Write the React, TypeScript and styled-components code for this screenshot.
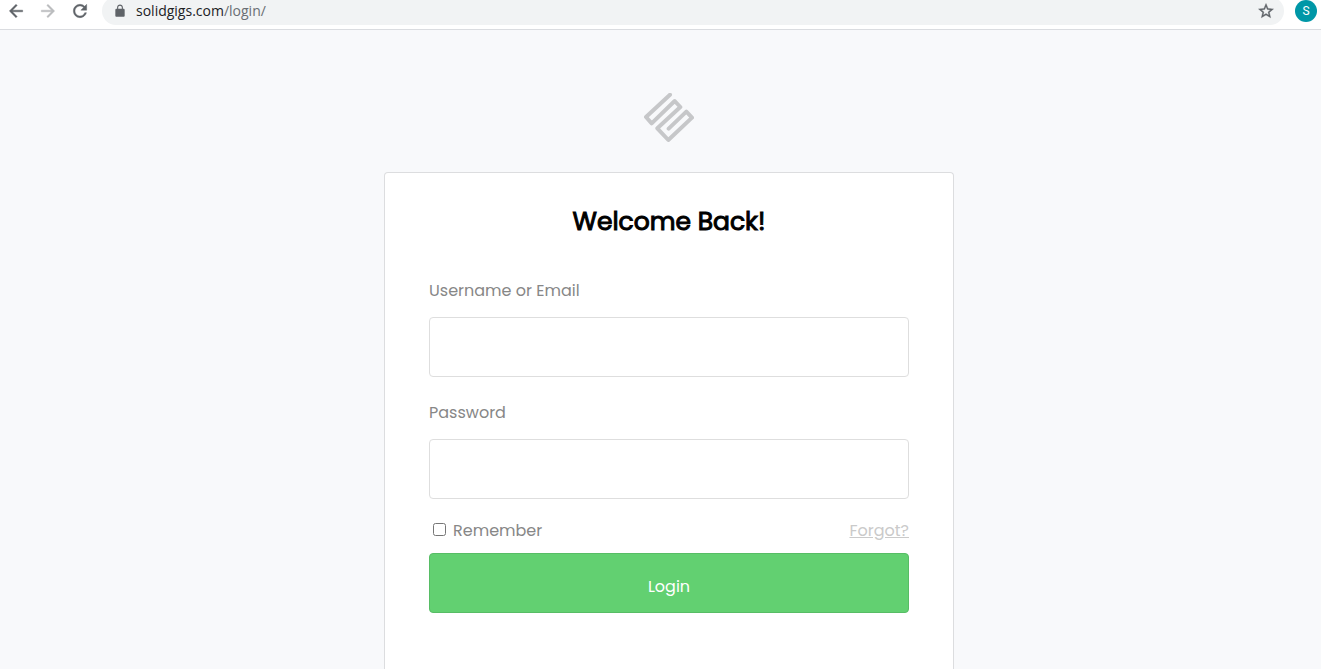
import React from "react";
import styled, { createGlobalStyle } from "styled-components";

const GlobalStyle = createGlobalStyle`
  *, *::before, *::after { box-sizing: border-box; }
  body {
    margin: 0;
    background: #f8f9fb;
    font-family: Poppins, Inter, sans-serif;
    font-size: 16px;
    line-height: 26px;
    color: #878787;
  }
`;

const Screen = styled.div`
  display: flex;
  flex-direction: column;
  min-height: 100vh;
  overflow: hidden;
`;

const Toolbar = styled.header`
  display: flex;
  align-items: center;
  margin-top: -3px;
  padding: 0 4px 4px 0;
  background: #fff;
  border-bottom: 1px solid #dadce0;
`;

const ToolButton = styled.button<{ $muted?: boolean }>`
  display: flex;
  align-items: center;
  justify-content: center;
  width: 32px;
  height: 28px;
  padding: 0;
  border: 0;
  background: none;
  color: ${(p) => (p.$muted ? "#babcbe" : "#5f6368")};

  svg {
    stroke: currentColor;
    stroke-width: 0.5;
  }
`;

const AddressBar = styled.div`
  display: flex;
  flex: 1;
  align-items: center;
  height: 28px;
  margin: 0 11px 0 6px;
  padding: 0 2px 0 11px;
  border-radius: 14px;
  background: #f1f3f4;
  color: #5f6368;
`;

const Address = styled.div`
  flex: 1;
  margin-left: 9px;
  font-family: "Segoe UI", "Open Sans", sans-serif;
  font-size: 14px;
  line-height: 20px;
  color: #6a6e73;
`;

const Host = styled.span`
  color: #202124;
`;

const Avatar = styled.button`
  width: 22px;
  height: 22px;
  padding: 0;
  border: 0;
  border-radius: 50%;
  background: #0097a7;
  color: #fff;
  font-family: Roboto, sans-serif;
  font-size: 12px;
  line-height: 22px;
`;

const Page = styled.main`
  display: flex;
  flex: 1;
  flex-direction: column;
  align-items: center;
  padding: 63px 0 0 17px;
`;

const Card = styled.section`
  flex: 1;
  width: 100%;
  max-width: 570px;
  margin-top: 29px;
  padding: 33px 44px 48px;
  border: 1px solid #dcdddf;
  border-bottom: 0;
  border-radius: 4px 4px 0 0;
  background: #fff;
`;

const Title = styled.h1`
  margin: 0 0 40px;
  font-size: 25px;
  font-weight: 400;
  line-height: 32px;
  text-align: center;
  color: #000;
  -webkit-text-stroke: 1px #000;
`;

const Field = styled.div`
  display: flex;
  flex-direction: column;
  gap: 13px;
  margin-bottom: 23px;

  &:last-of-type { margin-bottom: 19px; }
`;

const Fields = styled.div``;

const TextInput = styled.input`
  width: 100%;
  height: 60px;
  padding: 0 16px;
  border: 1px solid #dedede;
  border-radius: 4px;
  background: #fff;
  font: inherit;
`;

const Options = styled.div`
  display: flex;
  justify-content: space-between;
  margin-bottom: 9px;
`;

const Remember = styled.label`
  display: flex;
  gap: 7px;
`;

const Checkbox = styled.input`
  width: 13px;
  height: 13px;
  margin: 5px 0 0 4px;
`;

const ForgotLink = styled.a`
  color: #cacaca;
  text-decoration: underline;
`;

const LoginButton = styled.button`
  display: block;
  width: 100%;
  height: 60px;
  padding: 8px 0 0;
  border: 1px solid #57bd65;
  border-radius: 4px;
  background: #62d071;
  color: #fff;
  font: inherit;
`;

function Glyph({ d, size }: { d: string; size: number }) {
  return (
    <svg width={size} height={size} viewBox="0 0 24 24" fill="currentColor" aria-hidden="true">
      <path d={d} />
    </svg>
  );
}

function Logo() {
  return (
    <svg width="50" height="50" viewBox="30 27 150 150" role="img" aria-label="SolidGigs">
      <path
        d="M108 32 L36 99 L53 118 L122 51 L139 69 L70 133 L103 168 L174 101 L157 83 L104 134"
        fill="none"
        stroke="#c6c7c9"
        strokeWidth="12"
        strokeLinecap="round"
        strokeLinejoin="round"
      />
    </svg>
  );
}

export default function App() {
  return (
    <Screen>
      <GlobalStyle />
      <Toolbar>
        <ToolButton aria-label="Back">
          <Glyph size={20} d="M20 11H7.83l5.59-5.59L12 4l-8 8 8 8 1.41-1.41L7.83 13H20v-2z" />
        </ToolButton>
        <ToolButton aria-label="Forward" $muted>
          <Glyph size={20} d="M12 4l-1.41 1.41L16.17 11H4v2h12.17l-5.58 5.59L12 20l8-8z" />
        </ToolButton>
        <ToolButton aria-label="Reload">
          <Glyph
            size={20}
            d="M17.65 6.35C16.2 4.9 14.21 4 12 4c-4.42 0-7.99 3.58-7.99 8s3.57 8 7.99 8c3.73 0 6.84-2.55 7.73-6h-2.08c-.82 2.33-3.04 4-5.65 4-3.31 0-6-2.69-6-6s2.69-6 6-6c1.66 0 3.14.69 4.22 1.78L13 11h7V4l-2.35 2.35z"
          />
        </ToolButton>
        <AddressBar>
          <Glyph
            size={14}
            d="M18 8h-1V6c0-2.76-2.24-5-5-5S7 3.24 7 6v2H6c-1.1 0-2 .9-2 2v10c0 1.1.9 2 2 2h12c1.1 0 2-.9 2-2V10c0-1.1-.9-2-2-2zm-2.9 0H8.9V6c0-1.71 1.39-3.1 3.1-3.1s3.1 1.39 3.1 3.1v2z"
          />
          <Address>
            <Host>solidgigs.com</Host>/login/
          </Address>
          <ToolButton aria-label="Bookmark this page">
            <Glyph
              size={18}
              d="M22 9.24l-7.19-.62L12 2 9.19 8.63 2 9.24l5.46 4.73L5.82 21 12 17.27 18.18 21l-1.63-7.03L22 9.24zM12 15.4l-3.76 2.27 1-4.28-3.32-2.88 4.38-.38L12 6.1l1.71 4.04 4.38.38-3.32 2.88 1 4.28L12 15.4z"
            />
          </ToolButton>
        </AddressBar>
        <Avatar aria-label="Profile S">S</Avatar>
      </Toolbar>
      <Page>
        <Logo />
        <Card>
          <Title>Welcome Back!</Title>
          <form>
            <Fields>
              <Field>
                <label htmlFor="username">Username or Email</label>
                <TextInput id="username" type="text" />
              </Field>
              <Field>
                <label htmlFor="password">Password</label>
                <TextInput id="password" type="password" />
              </Field>
            </Fields>
            <Options>
              <Remember>
                <Checkbox type="checkbox" />
                Remember
              </Remember>
              <ForgotLink href="#forgot">Forgot?</ForgotLink>
            </Options>
            <LoginButton type="submit">Login</LoginButton>
          </form>
        </Card>
      </Page>
    </Screen>
  );
}
